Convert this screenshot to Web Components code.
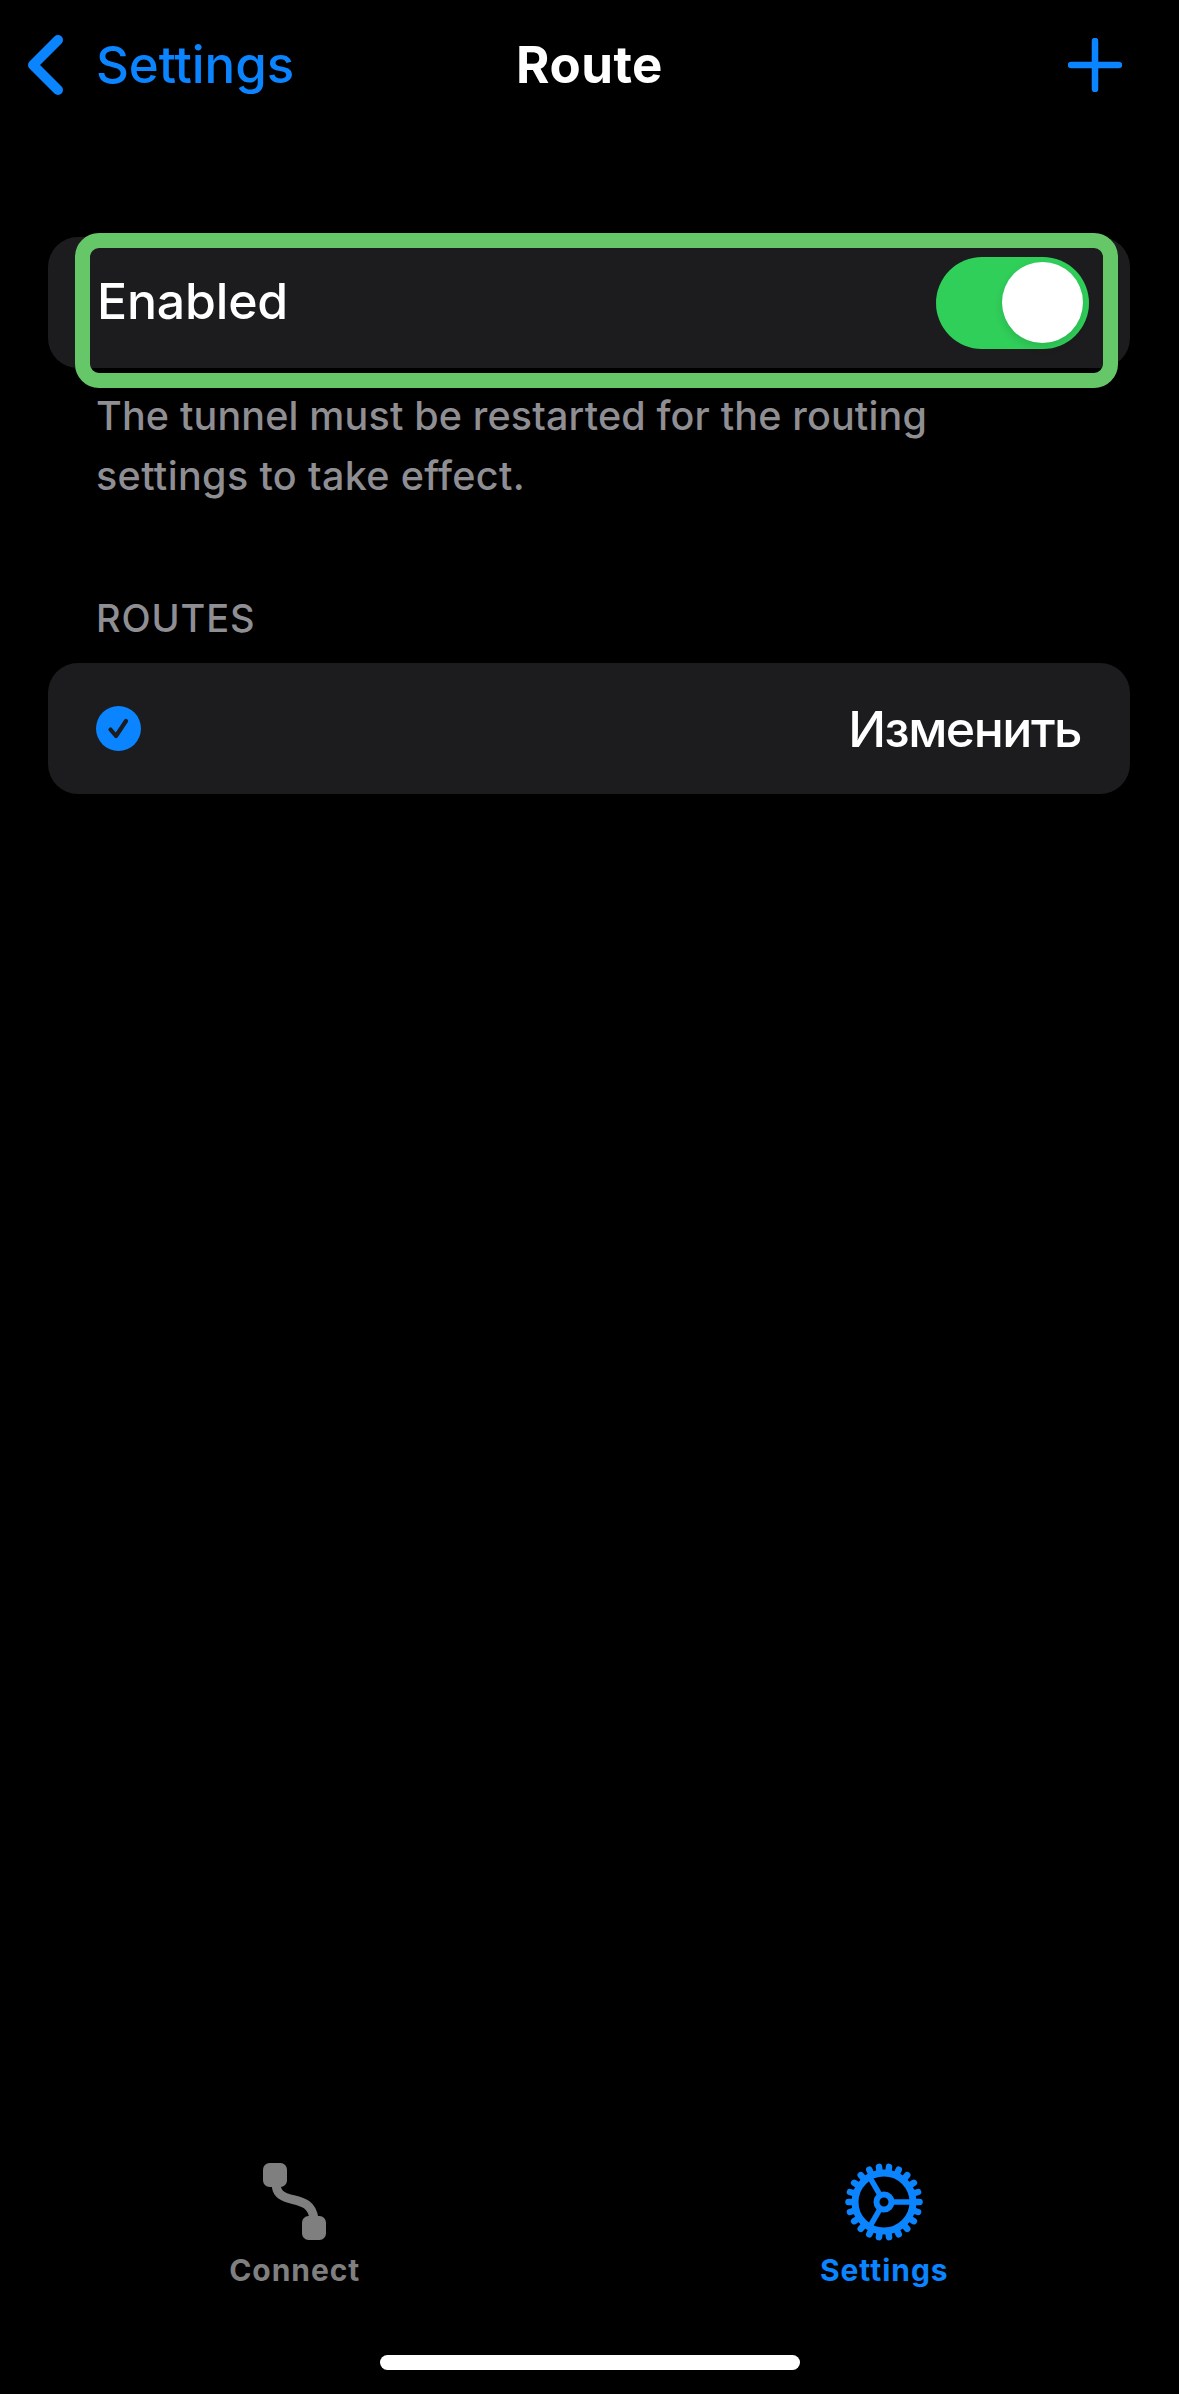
<!DOCTYPE html>
<html lang="en">
<head>
<meta charset="utf-8">
<title>Route</title>
<style>
html,body{margin:0;padding:0;background:#000}
body{font-family:Inter,"Liberation Sans",sans-serif;color:#fff}
.edit{margin-right:8px;letter-spacing:-1.5px}
.en{margin-top:-4px;letter-spacing:-.2px}
.l2{letter-spacing:.35px}
</style>
</head>
<body>
<app-shell>
  <nav-bar slot="nav" back="Settings" title="Route"></nav-bar>
  <group-card highlighted>
    <span class="en">Enabled</span>
    <ios-toggle></ios-toggle>
  </group-card>
  <section-note>The tunnel must be restarted for the routing<br><span class="l2">settings to take effect.</span></section-note>
  <section-head>ROUTES</section-head>
  <group-card>
    <check-mark></check-mark>
    <span class="edit">Изменить</span>
  </group-card>
  <tab-bar slot="tabs">
    <tab-item label="Connect" icon="connect"></tab-item>
    <tab-item label="Settings" icon="settings" active></tab-item>
  </tab-bar>
  <home-bar slot="tabs"></home-bar>
</app-shell>
<script>
function def(name, html, init){
  customElements.define(name, class extends HTMLElement{
    constructor(){super();this.attachShadow({mode:'open'}).innerHTML=html;}
    connectedCallback(){ if(init) init(this,this.shadowRoot); }
  });
}
def('app-shell',`<style>
:host{display:flex;flex-direction:column;width:1179px;height:2394px;background:#000;overflow:hidden}
main{flex:1;display:flex;flex-direction:column;padding:107px 49px 0 48px}
</style><slot name="nav"></slot><main><slot></slot></main><slot name="tabs"></slot>`);

def('nav-bar',`<style>
:host{display:grid;grid-template-columns:1fr auto 1fr;align-items:center;height:130px;flex:none;font:500 51px/60px Inter,"Liberation Sans",sans-serif;letter-spacing:-.1px}
.back{display:flex;align-items:center;gap:32px;padding-left:28px;color:#0a84ff}
.t{font-weight:700;color:#fff;letter-spacing:.5px}
.add{justify-self:end;margin-right:57px;display:flex}
svg{display:block}
</style>
<div class="back"><svg width="36" height="60" viewBox="0 0 36 60"><path d="M30 5 5 30l25 25" fill="none" stroke="#0a84ff" stroke-width="10" stroke-linecap="round" stroke-linejoin="round"/></svg><span id="b"></span></div>
<div class="t" id="t"></div>
<div class="add"><svg width="54" height="54" viewBox="0 0 54 54"><path d="M27 3v48M3 27h48" stroke="#0a84ff" stroke-width="6.5" stroke-linecap="round"/></svg></div>`,
(h,s)=>{s.getElementById('b').textContent=h.getAttribute('back');s.getElementById('t').textContent=h.getAttribute('title');h.removeAttribute('title');});

def('group-card',`<style>
:host{display:flex;position:relative;align-items:center;justify-content:space-between;height:131px;flex:none;padding:0 41px 0 49px;background:#1c1c1e;border-radius:30px;font:500 50px/60px Inter,"Liberation Sans",sans-serif;color:#fff}
.hl{display:none;position:absolute;left:27px;right:12px;top:-4px;bottom:-20px;box-sizing:border-box;border:15px solid #66c768;border-radius:24px;pointer-events:none}
:host([highlighted]) .hl{display:block}
</style><slot></slot><div class="hl"></div>`);

def('ios-toggle',`<style>
:host{display:block;position:relative;width:153px;height:92px;border-radius:46px;background:#30cf5a;flex:none}
i{position:absolute;top:5px;right:6px;width:81px;height:81px;border-radius:50%;background:#fff;box-shadow:0 4px 10px rgba(0,0,0,.12)}
</style><i></i>`);

def('section-note',`<style>
:host{display:block;margin:18px 0 0 48px;font:500 39.5px/60px Inter,"Liberation Sans",sans-serif;color:#8e8e93;letter-spacing:.15px}
</style><slot></slot>`);

def('section-head',`<style>
:host{display:block;margin:89px 0 22px 48px;font:500 38px/46px Inter,"Liberation Sans",sans-serif;color:#8e8e93;letter-spacing:.9px}
</style><slot></slot>`);

def('check-mark',`<style>
:host{display:block;width:45px;height:45px;margin-left:-1px;flex:none}
svg{display:block}
</style><svg width="45" height="45" viewBox="0 0 45 45"><circle cx="22.5" cy="22.5" r="22.5" fill="#0a84ff"/><path d="M14.500 23.500l5.500 6.500 10-15" fill="none" stroke="#1c1c1e" stroke-width="4.2" stroke-linecap="round" stroke-linejoin="round"/></svg>`);

def('tab-bar',`<style>
:host{display:flex;flex:none}
::slotted(*){flex:1}
</style><slot></slot>`);

function gear(){
  let teeth='';
  for(let k=0;k<22;k++){
    const a=k*2*Math.PI/22,c=Math.cos(a),n=Math.sin(a);
    teeth+=`M${(39+30*c).toFixed(2)} ${(39+30*n).toFixed(2)}L${(39+35.5*c).toFixed(2)} ${(39+35.5*n).toFixed(2)}`;
  }
  return `<svg width="78" height="78" viewBox="0 0 78 78"><g fill="none" stroke="#0a84ff"><path d="${teeth}" stroke-width="6.5" stroke-linecap="round"/><circle cx="39" cy="39" r="29" stroke-width="7"/><circle cx="39" cy="39" r="7.500" stroke-width="6"/><path d="M48 39H66M34.500 31.200 25.500 15.600M34.500 46.800 25.500 62.400" stroke-width="5.500"/></g></svg>`;
}
const connect=`<svg width="78" height="78" viewBox="-7 0 78 78"><g fill="#7f7f7f"><rect x="0" y="0" width="24" height="24" rx="6.500"/><rect x="39" y="53" width="24" height="24" rx="6.500"/></g><path d="M13 20C13 30 18 33 26 35.500C37 38.500 49 39 51 56" fill="none" stroke="#7f7f7f" stroke-width="9"/></svg>`;
def('tab-item',`<style>
:host{display:flex;flex-direction:column;align-items:center;color:#7f7f7f;font:700 30px/36px Inter,"Liberation Sans",sans-serif;letter-spacing:.95px}
:host([active]){color:#0a84ff}
#i{height:78px;margin-bottom:11px}
svg{display:block}
</style><div id="i"></div><div id="l"></div>`,
(h,s)=>{s.getElementById('l').textContent=h.getAttribute('label');s.getElementById('i').innerHTML=h.getAttribute('icon')==='settings'?gear():connect;});

def('home-bar',`<style>
:host{display:flex;justify-content:center;flex:none;padding:67px 0 24px}
b{display:block;width:420px;height:15px;border-radius:8px;background:#fff}
</style><b></b>`);
</script>
</body>
</html>
